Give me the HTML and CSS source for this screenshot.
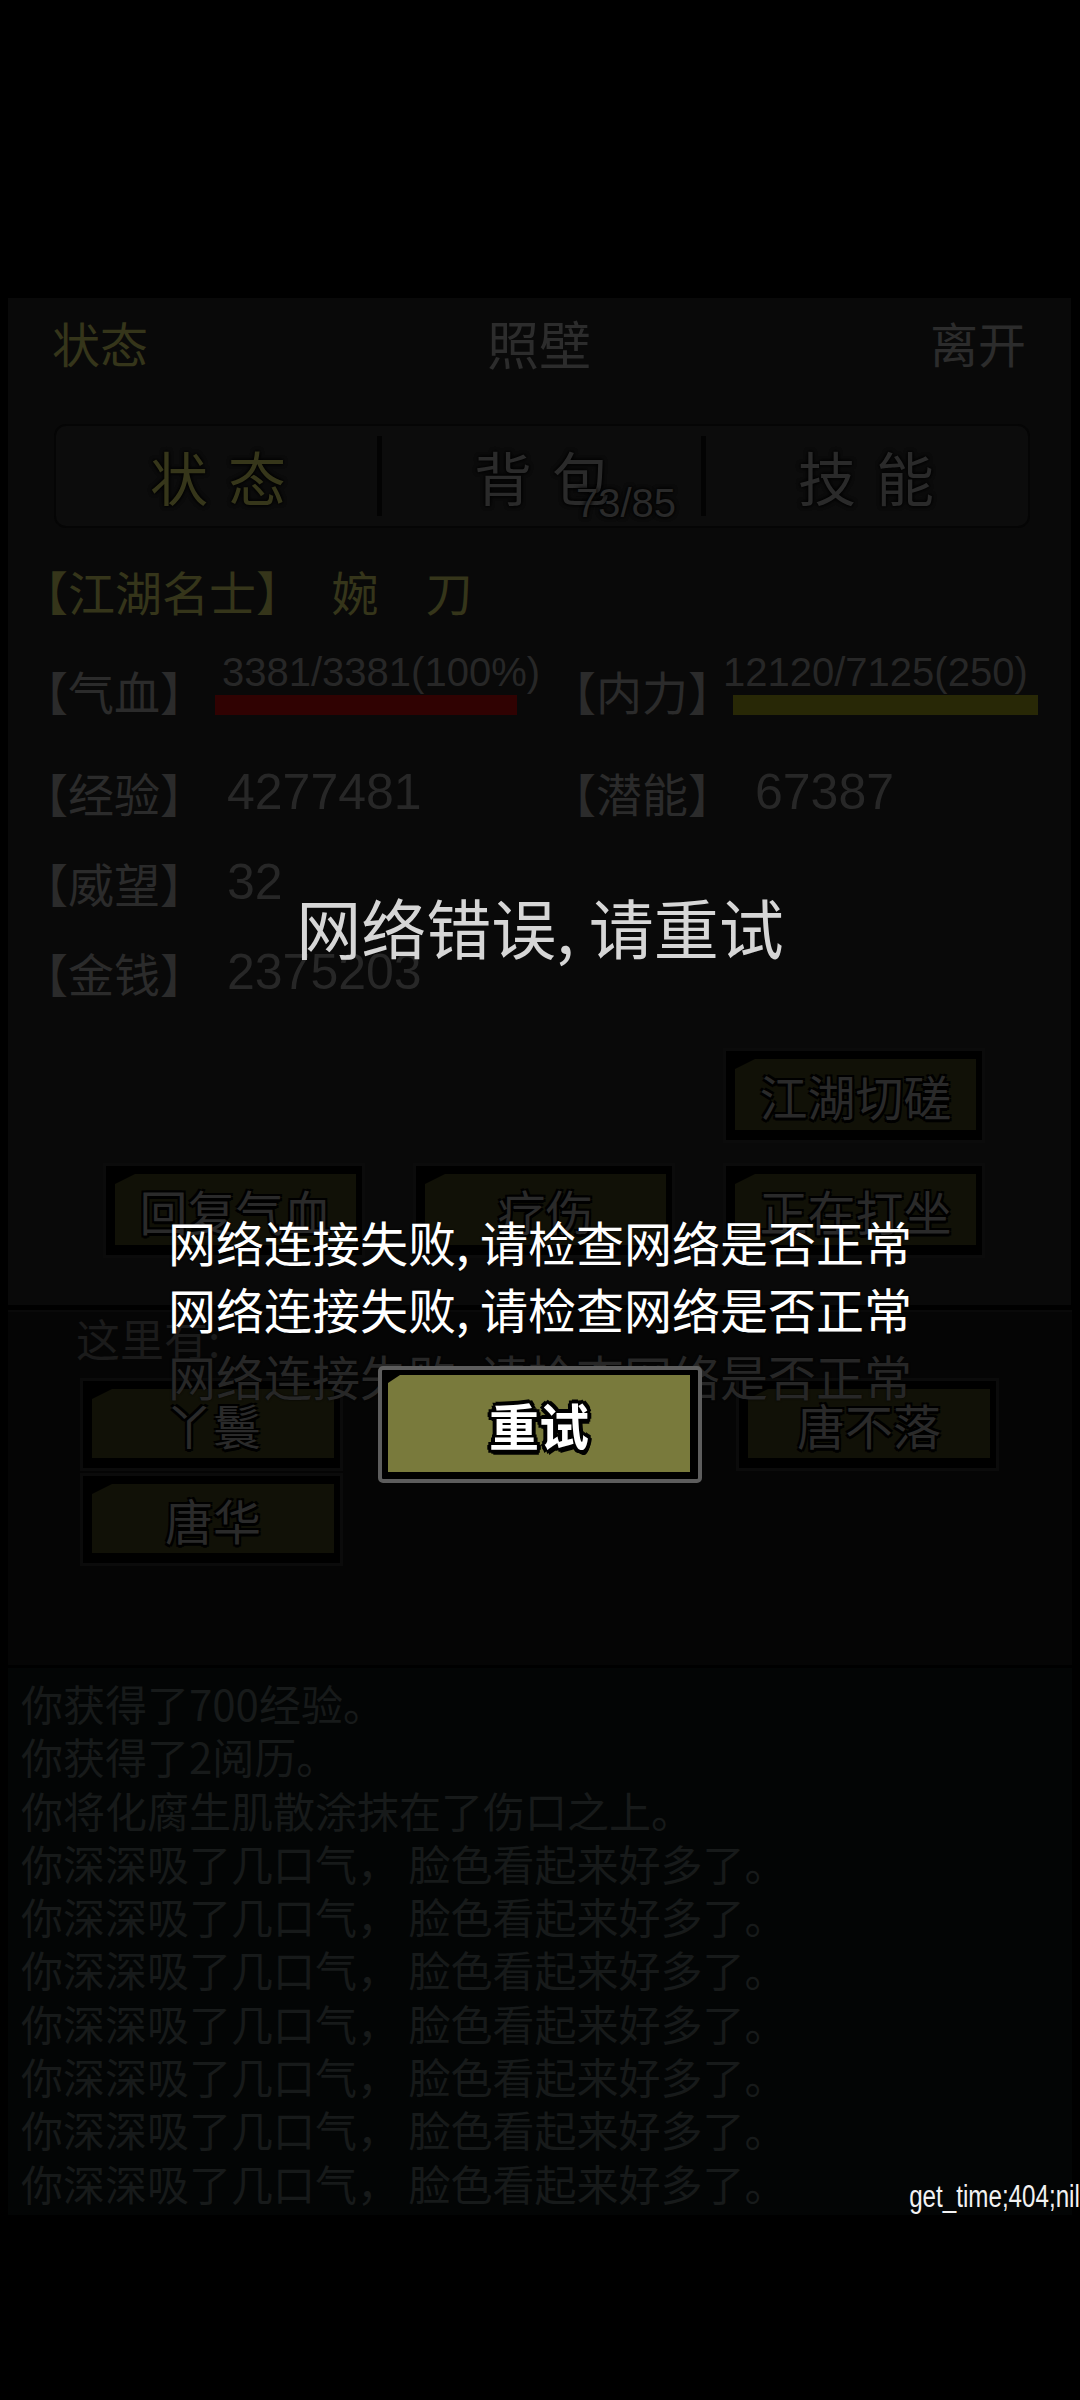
FILE: index.html
```html
<!DOCTYPE html>
<html lang="zh-CN">
<head>
    <meta charset="UTF-8">
    <meta name="viewport" content="width=device-width, initial-scale=1.0">
    <title>照壁</title>
    <link rel="stylesheet" href="styles.css">
</head>
<body>
<div class="screen">
    <div class="game">
        <div class="main-panel">
            <div class="topbar">
                <span class="olive">状态</span>
                <span class="place">照壁</span>
                <span>离开</span>
            </div>

            <div class="tabs">
                <div class="tab active">状态</div>
                <div class="tab">背包<span class="bag-count">73/85</span></div>
                <div class="tab">技能</div>
            </div>

            <div class="name-row">
                <span class="title olive">【江湖名士】</span>
                <span class="name olive">婉　刀</span>
            </div>

            <div class="stats">
                <div class="stat-row first">
                    <div class="stat">
                        <span class="label">【气血】</span>
                        <div class="bar-box hp">
                            <span class="bar-text">3381/3381(100%)</span>
                            <div class="bar red"></div>
                        </div>
                    </div>
                    <div class="stat">
                        <span class="label">【内力】</span>
                        <div class="bar-box mp">
                            <span class="bar-text">12120/7125(250)</span>
                            <div class="bar yellow"></div>
                        </div>
                    </div>
                </div>
                <div class="stat-row second">
                    <div class="stat">
                        <span class="label">【经验】</span>
                        <span class="value">4277481</span>
                    </div>
                    <div class="stat">
                        <span class="label">【潜能】</span>
                        <span class="value">67387</span>
                    </div>
                </div>
                <div class="stat-row">
                    <div class="stat">
                        <span class="label">【威望】</span>
                        <span class="value">32</span>
                    </div>
                </div>
                <div class="stat-row">
                    <div class="stat">
                        <span class="label">【金钱】</span>
                        <span class="value">2375203</span>
                    </div>
                </div>
            </div>

            <div class="actions">
                <div class="btn spar"><div class="btn-fill">江湖切磋</div></div>
                <div class="btn"><div class="btn-fill">回复气血</div></div>
                <div class="btn"><div class="btn-fill">疗伤</div></div>
                <div class="btn"><div class="btn-fill">正在打坐</div></div>
            </div>
        </div>

        <div class="room-panel">
            <div class="room-title">这里有:</div>
            <div class="npcs">
                <div class="btn npc"><div class="btn-fill">丫鬟</div></div>
                <div class="npc-empty"></div>
                <div class="btn npc"><div class="btn-fill">唐不落</div></div>
                <div class="btn npc"><div class="btn-fill">唐华</div></div>
            </div>
        </div>

        <div class="log-panel">
            <p>你获得了700经验。</p>
            <p>你获得了2阅历。</p>
            <p>你将化腐生肌散涂抹在了伤口之上。</p>
            <p>你深深吸了几口气， 脸色看起来好多了。</p>
            <p>你深深吸了几口气， 脸色看起来好多了。</p>
            <p>你深深吸了几口气， 脸色看起来好多了。</p>
            <p>你深深吸了几口气， 脸色看起来好多了。</p>
            <p>你深深吸了几口气， 脸色看起来好多了。</p>
            <p>你深深吸了几口气， 脸色看起来好多了。</p>
            <p>你深深吸了几口气， 脸色看起来好多了。</p>
        </div>
    </div>

    <!-- error overlay -->
    <div class="dialog-title">网络错误, 请重试</div>
    <div class="toasts">
        <p>网络连接失败, 请检查网络是否正常</p>
        <p>网络连接失败, 请检查网络是否正常</p>
        <p class="fading">网络连接失败, 请检查网络是否正常</p>
    </div>
    <div class="retry">
        <div class="retry-fill">重试</div>
    </div>

    <div class="debug">get_time;404;nil</div>
</div>
</body>
</html>
```

FILE: styles.css
```css
body {
    margin: 0;
    background-color: #000;
    font-family: "Noto Sans CJK SC", "Noto Sans", sans-serif;
}
p {
    margin: 0;
}
.screen {
    position: relative;
    width: 1080px;
    height: 2400px;
    overflow: hidden;
    background-color: #000;
}
.game {
    padding-top: 298px;
}
.olive {
    color: #35351a;
}

/* main panel */
.main-panel {
    height: 1007px;
    margin: 0 9px 0 8px;
    background-color: #090909;
}
.topbar {
    display: flex;
    justify-content: space-between;
    align-items: center;
    height: 88px;
    padding: 0 45px 0 44px;
    font-size: 48px;
    color: #2c2c2c;
}
.place {
    font-size: 52px;
}
.tabs {
    display: flex;
    height: 104px;
    margin: 38px 41px 0 46px;
    background-color: #0c0c0c;
    border: 2px solid #050505;
    border-radius: 12px;
    box-sizing: border-box;
}
.tab {
    position: relative;
    flex: 1;
    display: flex;
    align-items: center;
    justify-content: center;
    font-size: 58px;
    letter-spacing: 20px;
    padding-left: 20px;
    color: #2a2a2a;
    text-shadow: 0 0 4px #000, 0 0 4px #000;
}
.tab.active {
    color: #36361a;
}
.tab + .tab::before {
    content: "";
    position: absolute;
    left: -3px;
    top: 10px;
    bottom: 10px;
    width: 5px;
    background-color: #030303;
}
.bag-count {
    position: absolute;
    right: 28px;
    top: 57px;
    font-family: "Liberation Sans", Arial, sans-serif;
    font-size: 40px;
    line-height: 40px;
    letter-spacing: 0;
    color: #2a2a2a;
}
.name-row {
    height: 60px;
    margin-top: 33px;
    padding-left: 13px;
    line-height: 60px;
    font-size: 47px;
    white-space: nowrap;
}
.name {
    margin-left: 18px;
}

/* stats */
.stats {
    padding-left: 14px;
}
.stat-row {
    display: grid;
    grid-template-columns: 528px 1fr;
    height: 90px;
}
.stat-row.first {
    margin-top: 24px;
}
.stat-row.second {
    margin-top: 12px;
}
.stat {
    display: flex;
    align-items: center;
    white-space: nowrap;
}
.label {
    font-size: 46px;
    color: #2b2b2b;
}
.value {
    margin-left: 21px;
    font-family: "Liberation Sans", Arial, sans-serif;
    font-size: 50px;
    color: #272727;
}
.bar-box {
    display: flex;
    flex-direction: column;
    margin-bottom: 12px;
}
.bar-box.hp {
    width: 302px;
    margin-left: 9px;
}
.bar-box.hp .bar-text {
    padding-left: 7px;
}
.bar-box.mp {
    width: 305px;
    margin-left: -1px;
}
.bar-box.mp .bar-text {
    margin-left: -10px;
}
.bar-text {
    font-family: "Liberation Sans", Arial, sans-serif;
    font-size: 40px;
    line-height: 36px;
    color: #272727;
}
.bar {
    height: 20px;
    margin-top: 5px;
}
.bar.red {
    background-color: #300202;
}
.bar.yellow {
    background-color: #282806;
}

/* buttons */
.actions {
    display: grid;
    grid-template-columns: repeat(3, 262px);
    column-gap: 48px;
    row-gap: 20px;
    margin-top: 31px;
    padding-left: 95px;
}
.btn {
    height: 95px;
    padding: 8px 6px 10px 9px;
    border: 3px solid #0b0b0b;
    box-sizing: border-box;
    background-color: #000;
}
.spar {
    grid-column: 3;
}
.btn-fill {
    display: flex;
    align-items: center;
    justify-content: center;
    height: 100%;
    background-color: #111107;
    clip-path: polygon(20px 0, 100% 0, 100% 100%, 0 100%, 0 10px);
    font-size: 48px;
    color: #2a2a2a;
    text-shadow: -2px -2px 0 #000, 2px -2px 0 #000, -2px 2px 0 #000, 2px 2px 0 #000, 0 3px 0 #000;
}

/* room */
.room-panel {
    height: 355px;
    margin: 5px 8px 0;
    padding-left: 64px;
    background-color: #050505;
    border-top: 2px solid #090909;
    box-sizing: border-box;
}
.room-title {
    height: 52px;
    padding-left: 4px;
    font-size: 44px;
    line-height: 52px;
    color: #1b1b1b;
}
.npcs {
    display: grid;
    grid-template-columns: repeat(3, 263px);
    column-gap: 65px;
    row-gap: 2px;
    margin-top: 14px;
    padding-left: 8px;
}
.npc {
    height: 93px;
}

/* log */
.log-panel {
    height: 547px;
    margin: 3px 8px 0;
    padding: 8px 0 0 13px;
    background-color: #030505;
    box-sizing: border-box;
    font-size: 42px;
    line-height: 53.3px;
    color: #171a1a;
    white-space: nowrap;
}

/* overlay */
.dialog-title {
    position: absolute;
    top: 886px;
    left: 0;
    right: 0;
    text-align: center;
    font-size: 65px;
    line-height: 80px;
    color: #d6d6d6;
}
.toasts {
    position: absolute;
    top: 1208px;
    left: 0;
    right: 0;
    text-align: center;
    font-size: 48px;
    line-height: 67px;
    color: #fff;
    text-shadow: 0 0 2px #000;
}
.toasts .fading {
    color: #272727;
}
.retry {
    position: absolute;
    left: 378px;
    top: 1366px;
    width: 324px;
    height: 117px;
    padding: 5px 8px 7px 6px;
    border: 4px solid #5d5d5d;
    border-radius: 5px;
    box-sizing: border-box;
    background-color: #000;
}
.retry-fill {
    display: flex;
    align-items: center;
    justify-content: center;
    height: 100%;
    background-color: #797a3c;
    clip-path: polygon(12px 0, 100% 0, 100% 100%, 0 100%, 0 8px);
    font-size: 50px;
    font-weight: bold;
    color: #fff;
    text-shadow: -3px -3px 0 #000, 3px -3px 0 #000, -3px 3px 0 #000, 3px 3px 0 #000,
        0 -4px 0 #000, 0 4px 0 #000, -4px 0 0 #000, 4px 0 0 #000, 2px 5px 0 #000;
}
.debug {
    position: absolute;
    right: 0;
    top: 2178px;
    font-family: "Liberation Sans", Arial, sans-serif;
    font-size: 31px;
    line-height: 38px;
    color: #f2f2f2;
    transform: scaleX(0.78);
    transform-origin: right center;
}
```
